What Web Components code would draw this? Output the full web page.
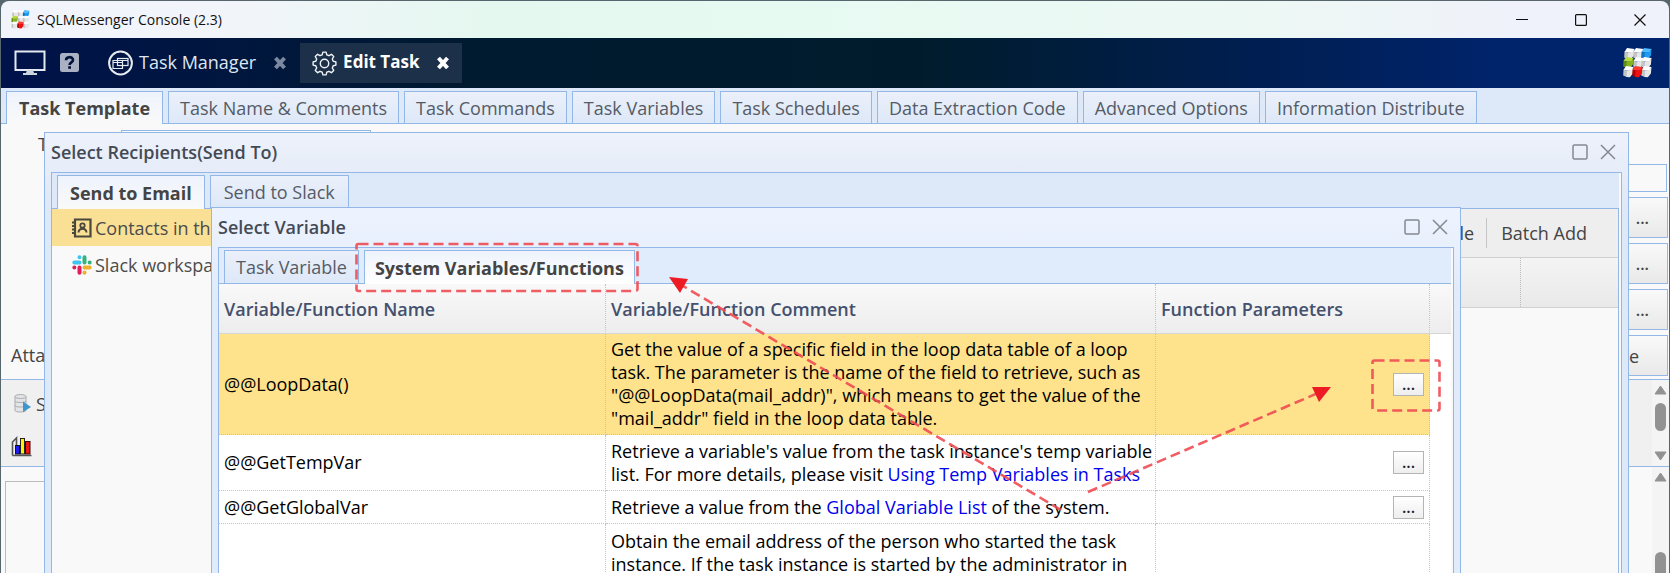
<!DOCTYPE html>
<html lang="en">
<head>
<meta charset="utf-8">
<title>SQLMessenger Console</title>
<style>
html,body{height:100%}
body{margin:0;overflow:hidden;background:#56666c;font:18px/22px "Open Sans","Noto Sans",sans-serif;color:#444;
--line:#93b7e6;--strip:#dde8f8;--panel:#f9f9f9}
</style>
</head>
<body>
<console-app></console-app>
<script>
const define=(name,html,setup)=>customElements.define(name,class extends HTMLElement{
  constructor(){
    super();
    const t=document.createElement('template');
    t.innerHTML='<style>*{box-sizing:border-box}button{font:inherit;color:inherit}</style>'+html;
    this.attachShadow({mode:'open'}).append(t.content.cloneNode(true));
    if(setup)setup(this.shadowRoot,this);
  }
});

/* Product logo: a grid of nine small cubes */
define('cube-logo',`<style>:host{display:block;flex:none;width:29px;height:30px}:host([small]){width:19px;height:19px}svg{display:block;width:100%;height:100%}</style>
<svg viewBox="0 0 29 30" aria-hidden="true"></svg>`,root=>{
  const cols={W:['#ffffff','#c4c4c4','#e6e6e6'],B:['#4dbbff','#0f74c4','#1f9cf0'],G:['#b7da3c','#5f8c10','#86b41f'],R:['#ff3b2f','#b00000','#ee1010']};
  const cube=(x,y,k)=>{const [a,b,c]=cols[k];
    return `<path d="M${x+3} ${y}l7.500 1-2 3.500-8-.5z" fill="${a}"/><path d="M${x+.5} ${y+3.5}l3 1 .2 6.500-3.500-1.500z" fill="${b}"/><path d="M${x+3.3} ${y+4.2}l5-.2 2.200-3-.6 6.500-3 3.800-3.600-.3z" fill="${c}"/>`};
  root.querySelector('svg').innerHTML=[[1,0,'W'],[10,0,'W'],[18,0,'B'],[0,9,'G'],[10,9,'W'],[18,9,'W'],[0,18,'W'],[18,18,'W'],[9,18,'R']].map(c=>cube(...c)).join('');
});

define('title-bar',`<style>
:host{display:flex;align-items:center;height:37px;padding-left:10px;font-size:14px;color:#111;background:linear-gradient(90deg,#f2f4fb,#f1f5fa 15%,#e4f8ef 30%,#e6faf2 45%,#edf8f4 75%,#eff2fa 90%)}
span{margin-left:7px;flex:1}
button{width:59px;height:37px;border:0;background:none;padding:0}
svg{display:block;margin:auto;fill:none;stroke:#111;stroke-width:1.2}
</style><cube-logo small></cube-logo><span>SQLMessenger Console (2.3)</span>
<button aria-label="Minimize"><svg width="12" height="12"><path d="M0 5.500h12"/></svg></button>
<button aria-label="Maximize"><svg width="12" height="12"><rect x=".6" y=".6" width="10.800" height="10.800" rx="1"/></svg></button>
<button aria-label="Close"><svg width="12" height="12"><path d="M.5.5l11 11M11.500.5l-11 11"/></svg></button>`);

define('nav-bar',`<style>
:host{display:flex;align-items:center;height:50px;padding:0 17px 0 13px;color:#dfe6f0;background:linear-gradient(90deg,#00124a,#001640 12%,#001a30 28%,#001c2c 55%,#001e50 75%,#00246c 90%)}
button{border:0;background:none;padding:0;height:40px;display:flex;align-items:center}
svg{display:block;flex:none}
.help{margin:0 29px 0 14px;width:19px;height:40px;padding-bottom:2px}
.tab span{margin-left:6px;padding-bottom:2px}
.x{margin-left:17px}
.edit{margin-left:13px;padding:0 12px;background:#1c3049;color:#fff;font-weight:700;font-size:17px}
.mgr .x{opacity:.55}
i{flex:1}
</style>
<button aria-label="Desktop"><svg width="32" height="26" viewBox="0 0 32 26"><rect x="1.500" y="1.500" width="29" height="18.500" fill="none" stroke="#e4e9f0" stroke-width="2"/><path d="M13 20h6l1 3h3v2H9v-2h3z" fill="#cfd5de"/></svg></button>
<button class="help" aria-label="Help"><svg width="19" height="19" viewBox="0 0 19 19"><rect width="19" height="19" rx="2.500" fill="#a9b1c2"/><path d="M6 7.200C6 3.200 13 3.200 13 7c0 2.400-3.400 2.300-3.400 5" fill="none" stroke="#031238" stroke-width="2.600"/><rect x="8.200" y="13.200" width="2.800" height="2.600" fill="#031238"/></svg></button>
<button class="tab mgr"><svg width="25" height="26" viewBox="0 0 25 26"><circle cx="12.500" cy="13" r="11.400" fill="none" stroke="#e6ebf2" stroke-width="2"/><g fill="none" stroke="#e6ebf2" stroke-width="1.200"><rect x="9.500" y="8.500" width="10.500" height="7"/><path d="M9.500 10.500h10.500M14.500 10.500v8h-9.500v-8h4.500M5 12.500h9.500"/></g></svg><span>Task Manager</span>
<svg class="x" width="14" height="14" viewBox="0 0 14 14"><path d="M2.500 2l9 10M11.500 2l-9 10" stroke="#dfe6f0" stroke-width="4"/></svg></button>
<button class="tab edit"><svg id="gear" width="25" height="25" viewBox="0 0 25 25"></svg><span>Edit Task</span>
<svg class="x" width="14" height="14" viewBox="0 0 14 14"><path d="M2.500 2l9 10M11.500 2l-9 10" stroke="#fff" stroke-width="4"/></svg></button>
<i></i><cube-logo></cube-logo>`,root=>{
  let pts=[];
  for(let i=0;i<8;i++)for(const [a,r] of [[-.26,9],[-.14,11.5],[.14,11.5],[.26,9]]){const q=i*Math.PI/4+a;pts.push((12.5+r*Math.cos(q)).toFixed(1)+','+(12.5+r*Math.sin(q)).toFixed(1))}
  root.querySelector('#gear').innerHTML=`<g fill="none" stroke="#f0f4f8" stroke-width="1.400" stroke-linejoin="round"><polygon points="${pts.join(' ')}"/><circle cx="12.500" cy="12.500" r="4.200"/></g>`;
});

define('tab-strip',`<style>
:host{display:flex;gap:5px;height:36px;padding:var(--strip-top,3px) 5px 0;box-sizing:border-box;background:var(--strip);border-bottom:1px solid var(--line)}
::slotted(*){margin-bottom:-1px}
</style><slot></slot>`);
define('tab-item',`<style>
:host{display:block;flex:none}
button{display:block;height:100%;padding:0 var(--tab-pad,11px);border:1px solid var(--line);background:linear-gradient(#ebf0fa,#dde8f8);color:#555b66;white-space:nowrap}
:host([active]) button{border-bottom:0;padding:0 var(--active-pad,12px);font-weight:700;color:#444;background:linear-gradient(#eef3fc,var(--tab-end,#f9f9f9))}
</style><button><slot></slot></button>`);

define('dialog-window',`<style>
:host{display:flex;flex-direction:column;box-sizing:border-box;padding:0 6px;border:1px solid var(--line);background:var(--frame)}
header{display:flex;align-items:center;height:39px;padding-bottom:2px;flex:none;font-weight:600;color:#444a55}
h2{flex:1;margin:0;font:inherit}
header button{border:0;background:none;padding:0;width:16px;height:16px;margin-right:12px}
header button:last-child{margin-right:6px}
svg{display:block;fill:none;stroke:#85888f;stroke-width:1.500}
section{flex:1;display:flex;flex-direction:column;border:1px solid var(--line);border-bottom:0;background:var(--panel);padding-right:2px;min-height:0}
</style><header><h2></h2>
<button aria-label="Maximize"><svg width="16" height="16"><rect x="1" y="1" width="14" height="14" rx="1.500"/></svg></button>
<button aria-label="Close"><svg width="16" height="16"><path d="M1 1l14 14M15 1L1 15"/></svg></button></header>
<section><slot></slot></section>`,(root,el)=>{root.querySelector('h2').textContent=el.getAttribute('heading')});

define('recipient-tree',`<style>
:host{display:block;flex:none;width:220px}
a{display:flex;align-items:center;gap:3px;height:37px;padding-left:20px;color:#4c4c4c;text-decoration:none;white-space:nowrap}
a.on{background:#f9e094}
svg{flex:none}
</style>
<a class="on" href="#contacts"><svg width="20" height="20" viewBox="0 0 20 20"><path d="M3 1.500h15.500v17H3z" fill="none" stroke="#4a473c" stroke-width="2.200"/><path d="M0 4.500h4M0 8h4M0 11.500h4M0 15h4" stroke="#4a473c" stroke-width="1.800"/><circle cx="10.500" cy="7.500" r="2.200" fill="none" stroke="#4a473c" stroke-width="1.800"/><path d="M6.500 14.500c.5-5 7.500-5 8 0" fill="none" stroke="#4a473c" stroke-width="2"/></svg>Contacts in th</a>
<a href="#slack"><svg width="20" height="20" viewBox="0 0 20 20" fill="none" stroke-width="4" stroke-linecap="round"><path d="M2.300 7.500h5.200M7.500 2.200v.1" stroke="#3fc3ef"/><path d="M12.500 2.300v5.200M17.600 7.500h.1" stroke="#35b37e"/><path d="M12.500 12.500h5.200M12.500 17.600v.1" stroke="#ecb22e"/><path d="M7.500 12.500v5.200M2.300 12.500h.1" stroke="#e01e5a"/></svg>Slack workspa</a>`);

define('recipient-pane',`<style>
:host{display:block;flex:1;border-right:1px solid var(--line)}
nav{display:flex;justify-content:flex-end;align-items:center;height:49px;padding-right:31px;background:#eee;border-bottom:1px solid #d0d0d0}
button{border:0;background:none;padding:0}
i{width:1px;height:30px;background:#c4c4c4;margin:0 14px 0 12px}
.head{display:flex;justify-content:flex-end;height:50px;background:linear-gradient(#f4f4f4,#e9e9e9);border-bottom:1px solid #d0d0d0}
.head span{width:98px;border-left:1px dotted #bbb}
</style><nav><button>le</button><i></i><button>Batch Add</button></nav><div class="head"><span></span></div>`);

define('variable-table',`<style>
:host{display:block;background:#fff;flex:1;overflow:hidden}
table{width:100%;table-layout:fixed;border-collapse:separate;border-spacing:0;color:#000;line-height:23px}
th{height:50px;padding:2px 5px 0;text-align:left;font-weight:600;color:#44506e;background:linear-gradient(#f9f9f9,#ededed);border-right:1px dotted #c4c4c4;border-bottom:1px solid #d6d6d6}
td{padding:4px 0 4px 5px;border-right:1px dotted #c4c4c4;border-bottom:1px dotted #c4c4c4}
th:last-child,td:last-child{border-right:0}
td:last-child{border-bottom:0}
tr.on td:not(:last-child){background:#ffe28c}
.name{width:387px}.param{width:274px}.fill{width:21px}
.r4 td{height:101px}.r2 td{height:56px}.r1 td{height:33px}
.last td{height:120px;vertical-align:top;padding-top:6px}
a{color:#00e;text-decoration:none}
td button{display:block;margin:0 5px 0 auto;width:31px;height:23px;padding:0;border:1px solid #b4b4b4;background:linear-gradient(#fff,#eee);font-size:16px;font-weight:600;line-height:21px;color:#223}
</style>
<table><colgroup><col class="name"><col><col class="param"><col class="fill"></colgroup>
<thead><tr><th>Variable/Function Name</th><th>Variable/Function Comment</th><th>Function Parameters</th><th></th></tr></thead>
<tbody>
<tr class="on r4"><td>@@LoopData()</td><td>Get the value of a specific field in the loop data table of a loop task. The parameter is the name of the field to retrieve, such as "@@LoopData(mail_addr)", which means to get the value of the "mail_addr" field in the loop data table.</td><td><button>...</button></td><td></td></tr>
<tr class="r2"><td>@@GetTempVar</td><td>Retrieve a variable's value from the task instance's temp variable list. For more details, please visit <a href="#temp">Using Temp Variables in Tasks</a></td><td><button>...</button></td><td></td></tr>
<tr class="r1"><td>@@GetGlobalVar</td><td>Retrieve a value from the <a href="#global">Global Variable List</a> of the system.</td><td><button>...</button></td><td></td></tr>
<tr class="last"><td></td><td>Obtain the email address of the person who started the task instance. If the task instance is started by the administrator in</td><td></td><td></td></tr>
</tbody></table>`);

define('scroll-rail',`<style>
:host{display:flex;flex-direction:column;align-items:center;width:17px;flex:none;padding:5px 0;box-sizing:border-box;background:#f4f4f4}
svg{display:block;flex:none}
b{width:11px;height:28px;border-radius:6px;background:#929292;margin-top:8px}
:host([low]) b{margin-top:70px;height:80px}
i{flex:1}
:host([low]) .dn{display:none}
</style><svg width="13" height="10"><path d="M6.500 1L12 9H1z" fill="#929292" stroke="#929292" stroke-linejoin="round"/></svg><b></b><i></i>
<svg class="dn" width="13" height="10"><path d="M6.500 9L12 1H1z" fill="#929292" stroke="#929292" stroke-linejoin="round"/></svg>`);

define('task-form',`<style>
:host{display:block;background:var(--panel)}
.form{display:flex;justify-content:space-between;height:256px;border-bottom:1px solid var(--line)}
.left{display:flex;flex-direction:column;justify-content:space-between;padding:6px 0 13px}
.row{display:flex;align-items:center;height:28px}
.row label{width:83px;margin-left:37px}
input{border:1px solid var(--line);background:var(--panel);height:28px;width:250px}
.att{padding-left:10px}
.right{display:flex;flex-direction:column;align-items:flex-end;gap:5px;padding:40px 1px 0 0}
.right input{width:120px;margin-right:1px}
.right button{width:80px;height:41px;padding:0 18px 0 0;text-align:right;border:1px solid var(--line);background:linear-gradient(#f9f9f9,#e9e9e9);color:#444}
.right button.dots{font-size:16px;font-weight:600}
.right button.wide{padding-right:28px}
.tools{display:flex;justify-content:space-between;height:87px;background:#f0f0f0;border-bottom:1px solid var(--line)}
.tools div{padding:13px 0 0 10px;display:grid;grid-template-columns:22px auto;grid-auto-rows:22px;row-gap:20px;column-gap:3px;align-content:start}
.low{display:flex;height:300px}
.frame{flex:1;margin:14px 60px 0 4px;border:1px solid #bbb}
</style>
<div class="form"><div class="left"><div class="row"><label for="t">T</label><input id="t"></div><span class="att">Atta</span></div>
<div class="right"><input aria-label="Recipients"><button class="dots">...</button><button class="dots">...</button><button class="dots">...</button><button class="wide">e</button></div></div>
<div class="tools"><div>
<svg width="22" height="22" viewBox="0 0 22 22"><g fill="#e2e4e6" stroke="#a6abb0"><path d="M4 3.500v14c0 2 11 2 11 0v-14"/><ellipse cx="9.500" cy="3.500" rx="5.500" ry="2"/><path d="M4 8c0 2 11 2 11 0M4 12.500c0 2 11 2 11 0" fill="none"/></g><path d="M12 8.500l8 5.500-8 5z" fill="#3f97c9"/></svg><span>S</span>
<svg width="22" height="22" viewBox="0 0 22 22"><path d="M1.500 20.500V7l4-4v14M1.500 20.500h19" fill="none" stroke="#555" stroke-width="1.600"/><rect x="4.500" y="10.500" width="4" height="8.500" fill="#1c1cf0" stroke="#111"/><rect x="9.500" y="3.500" width="4" height="15.500" fill="#fff200" stroke="#222"/><rect x="14.500" y="6.500" width="4.500" height="12.500" fill="#e81818" stroke="#400"/></svg>
</div><scroll-rail></scroll-rail></div>
<div class="low"><div class="frame"></div><scroll-rail low></scroll-rail></div>`);

/* Red dashed callouts lying over the windows */
define('callout-layer',`<style>
:host{position:absolute;inset:0;pointer-events:none}svg{display:block;width:100%;height:100%}
</style><svg aria-hidden="true"><g fill="none" stroke="#ee4b52" stroke-opacity=".9" stroke-width="2.600" stroke-dasharray="10 5"><rect x="356.500" y="244" width="281" height="47" rx="2"/><rect x="1372.500" y="360.500" width="67" height="50" rx="2"/><path d="M1061 510L683 286M1088 492L1318 393"/></g><path d="M669 277l19 2-8 14zM1331 387l-19 0 7 15z" fill="#ed1c24"/></svg>`);

define('console-app',`<style>
:host{display:block;position:relative;height:100vh;overflow:hidden}
.win{margin:1px 1px 0;border-radius:8px 8px 0 0;overflow:hidden}
.body{display:flex;flex:1}
dialog-window{position:absolute;bottom:-2px;--strip-top:2px}
.recipients{left:44px;right:41px;top:132px;--tab-pad:13px;--frame:linear-gradient(#edf2fb,#e6ecf8 40px,#dde8f8 80px)}
.variables{left:211px;right:209px;top:207px;--active-pad:10px;--strip:#e0ebfb;--tab-end:#fff;--frame:linear-gradient(#edf3fe,#e8f0fd 40px,#e0ebfb 80px)}
</style>
<div class="win"><title-bar></title-bar><nav-bar></nav-bar>
<tab-strip><tab-item active>Task Template</tab-item><tab-item>Task Name &amp; Comments</tab-item><tab-item>Task Commands</tab-item><tab-item>Task Variables</tab-item><tab-item>Task Schedules</tab-item><tab-item>Data Extraction Code</tab-item><tab-item>Advanced Options</tab-item><tab-item>Information Distribute</tab-item></tab-strip>
<task-form></task-form></div>
<dialog-window class="recipients" heading="Select Recipients(Send To)">
<tab-strip><tab-item active>Send to Email</tab-item><tab-item>Send to Slack</tab-item></tab-strip>
<div class="body"><recipient-tree></recipient-tree><recipient-pane></recipient-pane></div></dialog-window>
<dialog-window class="variables" heading="Select Variable">
<tab-strip><tab-item>Task Variable</tab-item><tab-item active>System Variables/Functions</tab-item></tab-strip>
<variable-table></variable-table></dialog-window>
<callout-layer></callout-layer>`);
</script>
</body>
</html>
